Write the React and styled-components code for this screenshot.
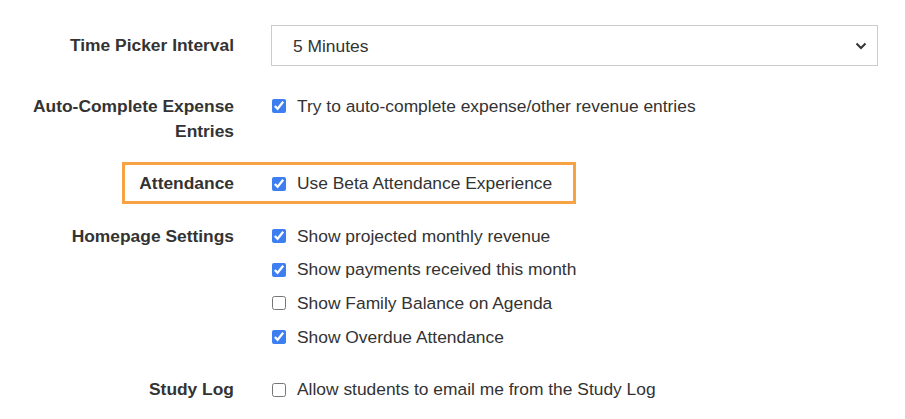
import styled, { createGlobalStyle } from 'styled-components';

const GlobalStyle = createGlobalStyle`
    body {
        margin: 0;
        background: #fff;
        font-family: "Liberation Sans", Arial, sans-serif;
        font-size: 17.4px;
        color: #333;
    }
`;

const homepageOptions = [
    { text: 'Show projected monthly revenue', checked: true },
    { text: 'Show payments received this month', checked: true },
    { text: 'Show Family Balance on Agenda', checked: false },
    { text: 'Show Overdue Attendance', checked: true },
];

const Chevron = () => (
    <svg width="12" height="8" viewBox="0 0 12 8">
        <path d="M1.5 1.5 L6 6 L10.5 1.5" fill="none" stroke="#333" strokeWidth="2" />
    </svg>
);

const Check = ({ text, checked }) => (
    <CheckLabel>
        <input type="checkbox" defaultChecked={checked} />
        <span>{text}</span>
    </CheckLabel>
);

const App = () => {
    return (
        <>
            <GlobalStyle />
            <Form>
                <Row $center>
                    <Label>Time Picker Interval</Label>
                    <SelectWrap>
                        <Select defaultValue="5">
                            <option value="5">5 Minutes</option>
                            <option value="10">10 Minutes</option>
                            <option value="15">15 Minutes</option>
                        </Select>
                        <span className="arrow">
                            <Chevron />
                        </span>
                    </SelectWrap>
                </Row>

                <Row>
                    <Label>
                        Auto-Complete Expense
                        <br />
                        Entries
                    </Label>
                    <Controls>
                        <Check text="Try to auto-complete expense/other revenue entries" checked />
                    </Controls>
                </Row>

                <Row $highlight>
                    <Label>Attendance</Label>
                    <Controls>
                        <Check text="Use Beta Attendance Experience" checked />
                    </Controls>
                </Row>

                <Row>
                    <Label>Homepage Settings</Label>
                    <Controls>
                        {homepageOptions.map((o) => (
                            <Check key={o.text} text={o.text} checked={o.checked} />
                        ))}
                    </Controls>
                </Row>

                <Row>
                    <Label>Study Log</Label>
                    <Controls>
                        <Check text="Allow students to email me from the Study Log" />
                    </Controls>
                </Row>
            </Form>
        </>
    );
};

const Form = styled.form`
    display: flex;
    flex-direction: column;
    gap: 27.5px;
    padding-top: 25px;
    width: 878px;
`;

const Row = styled.div`
    position: relative;
    display: grid;
    grid-template-columns: 234px 607px;
    column-gap: 37px;
    align-items: ${(p) => (p.$center ? 'center' : 'start')};
    line-height: 25px;

    ${(p) =>
        p.$highlight &&
        `
        &::after {
            content: '';
            position: absolute;
            left: 122px;
            top: -9px;
            width: 454px;
            height: 42px;
            box-sizing: border-box;
            border: 3px solid #f7a243;
            pointer-events: none;
        }
    `}
`;

const Label = styled.label`
    text-align: right;
    font-weight: bold;
    color: #333;
`;

const Controls = styled.div`
    display: flex;
    flex-direction: column;
    gap: 8.7px;
`;

const CheckLabel = styled.label`
    display: flex;
    align-items: center;
    gap: 11px;
    padding-left: 1px;
    color: #333;

    input {
        width: 14px;
        height: 14px;
        margin: 0;
        accent-color: #3d7ff0;
    }
`;

const SelectWrap = styled.div`
    position: relative;

    .arrow {
        position: absolute;
        right: 11px;
        top: 17px;
        display: flex;
        pointer-events: none;
    }
`;

const Select = styled.select`
    appearance: none;
    width: 100%;
    height: 41px;
    box-sizing: border-box;
    border: 1px solid #ccc;
    border-radius: 0;
    background: #fff;
    padding: 0 20px 0 21px;
    font-family: "Liberation Sans", Arial, sans-serif;
    font-size: 17.4px;
    color: #333;
`;

export default App;
